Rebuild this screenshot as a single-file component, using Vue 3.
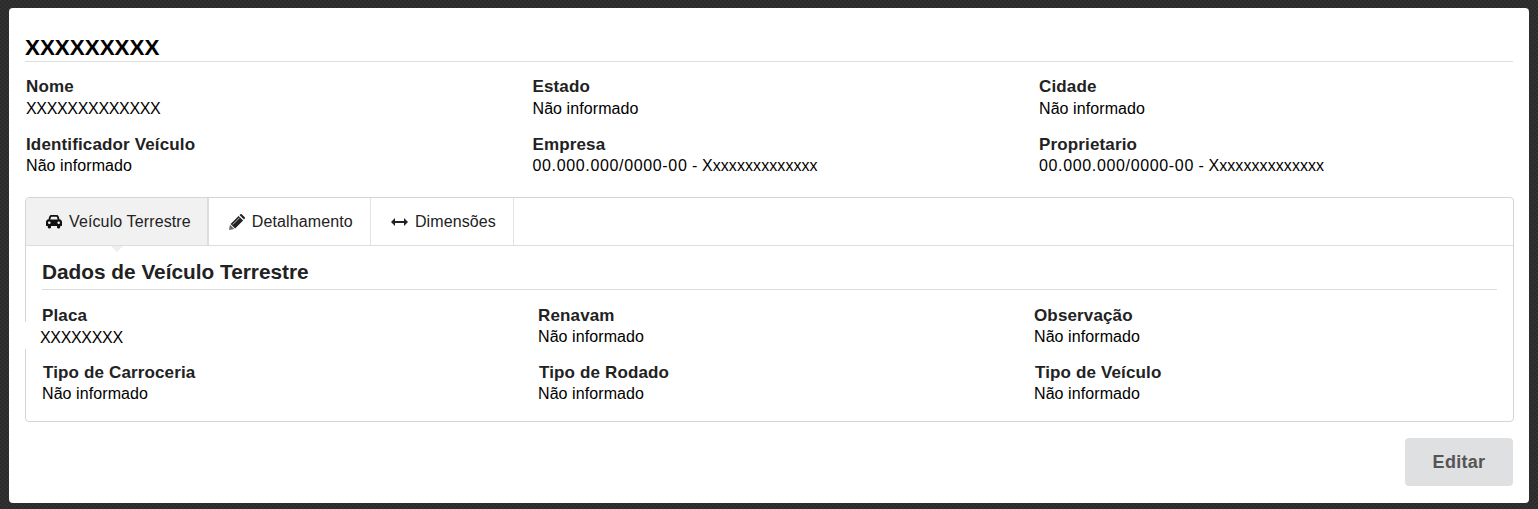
<template>
  <div class="backdrop">
    <div class="modal">
      <h2 class="title">XXXXXXXXX</h2>
      <div class="fields main-fields">
        <div v-for="f in mainFields" :key="f.label" class="field">
          <label>{{ f.label }}</label>
          <div v-if="f.doc" class="value"><span class="doc">{{ f.doc }}</span> - {{ f.value }}</div>
          <div v-else class="value" :class="f.type">{{ f.value }}</div>
        </div>
      </div>

      <div class="tabs">
        <ul class="tab-nav">
          <li v-for="(t, i) in tabs" :key="t.label" :class="{ active: i === 0 }">
            <svg v-if="t.icon === 'car'" width="16" height="14" viewBox="0 0 16 14">
              <path fill-rule="evenodd" fill="#111" d="M3.300 1.600C3.600.6 4.400 0 5.300 0h5.400c.9 0 1.700.6 2 1.600l.9 2.800.7.200c.9.400 1.700 1.200 1.700 2.300v3.600c0 .3-.2.500-.5.500H14.200v1.300c0 .7-.5 1.200-1.200 1.200h-.8c-.7 0-1.200-.5-1.200-1.200V11H5v1.300c0 .7-.5 1.200-1.200 1.200H3c-.7 0-1.200-.5-1.200-1.200V11H.5c-.3 0-.5-.2-.5-.5V6.900c0-1.100.8-1.900 1.700-2.300l.7-.2zM4.300 4.500h7.400l-.7-2.300c-.1-.3-.3-.5-.6-.5H5.600c-.3 0-.5.200-.6.500zM3.300 6.500a1.300 1.300 0 1 0 0 2.600 1.300 1.300 0 0 0 0-2.600zM12.700 6.500a1.300 1.300 0 1 0 0 2.600 1.300 1.300 0 0 0 0-2.600z"/>
            </svg>
            <svg v-else-if="t.icon === 'pencil'" width="16" height="16" viewBox="0 0 16 16">
              <path fill="#666" d="M0 16l1-5.300 4.300 4.300z"/>
              <path fill="#222" d="M1.600 9.900l8-8 4.500 4.500-8 8zM10.500 1l.7-.6c.5-.5 1.200-.5 1.700 0l2.700 2.700c.5.500.5 1.200 0 1.700l-.6.700z"/>
              <path stroke="#fff" stroke-width=".7" d="M3.800 10.500l6.800-6.800"/>
            </svg>
            <svg v-else width="17" height="8" viewBox="0 0 17 8">
              <path fill="#222" d="M0 4l4-4v3h9V0l4 4-4 4V5H4v3z"/>
            </svg>
            <span>{{ t.label }}</span>
          </li>
        </ul>
        <div class="tab-body">
          <h3 class="section-title">Dados de Veículo Terrestre</h3>
          <div class="fields inner-fields">
            <div v-for="f in vehicleFields" :key="f.label" class="field" :class="f.cls">
              <label>{{ f.label }}</label>
              <div class="value" :class="f.type">{{ f.value }}</div>
            </div>
          </div>
        </div>
      </div>

      <div class="actions">
        <button class="btn-edit" disabled>Editar</button>
      </div>
    </div>
  </div>
</template>

<script setup>
const none = 'Não informado'
const doc = '00.000.000/0000-00'
const owner = 'Xxxxxxxxxxxxxx'

const mainFields = [
  { label: 'Nome', value: 'XXXXXXXXXXXXX', type: 'masked' },
  { label: 'Estado', value: none },
  { label: 'Cidade', value: none },
  { label: 'Identificador Veículo', value: none },
  { label: 'Empresa', doc, value: owner },
  { label: 'Proprietario', doc, value: owner }
]

const tabs = [
  { label: 'Veículo Terrestre', icon: 'car' },
  { label: 'Detalhamento', icon: 'pencil' },
  { label: 'Dimensões', icon: 'arrows' }
]

const vehicleFields = [
  { label: 'Placa', value: 'XXXXXXXX', cls: 'plate', type: 'masked' },
  { label: 'Renavam', value: none },
  { label: 'Observação', value: none },
  { label: 'Tipo de Carroceria', value: none, cls: 'nudge' },
  { label: 'Tipo de Rodado', value: none, cls: 'nudge' },
  { label: 'Tipo de Veículo', value: none, cls: 'nudge' }
]
</script>

<style>
html, body {
  margin: 0;
  background: #2b2b2b;
}
</style>

<style scoped>
.backdrop {
  width: 1538px;
  height: 509px;
  box-sizing: border-box;
  padding: 8px 9px 6px;
  overflow: hidden;
  background-color: #2d2d2d;
  background-image: repeating-conic-gradient(#2a2a2a 0 25%, #323232 0 50%);
  background-size: 4px 4px;
  font-family: "Liberation Sans", Arial, sans-serif;
  color: #000;
}

.modal {
  height: 495px;
  box-sizing: border-box;
  padding: 26px 16px 16px;
  background: #fff;
  border-radius: 4px;
}

.title {
  margin: 0;
  height: 27px;
  font-size: 22.4px;
  line-height: 27px;
  font-weight: 700;
  color: #000;
  border-bottom: 1px solid #ddd;
}

.fields {
  display: grid;
  grid-template-columns: repeat(3, 1fr);
  column-gap: 30px;
}

.main-fields {
  width: 1489.5px;
  margin: 14px 0 0 1px;
}

.main-fields .field:nth-child(n+4) label {
  margin-top: 1px;
  line-height: 21px;
}

.inner-fields {
  width: 1458px;
  margin: 15px 0 0 1px;
}

.inner-fields label {
  line-height: 21px;
}

.field {
  height: 57px;
}

label {
  display: block;
  font-size: 17px;
  line-height: 22px;
  font-weight: 700;
  letter-spacing: 0.14px;
  color: #222;
}

.value {
  font-size: 16px;
  line-height: 22px;
  letter-spacing: 0.08px;
  color: #000;
}

.value.masked {
  letter-spacing: -0.33px;
}

.doc {
  letter-spacing: 0.65px;
}

.plate .value {
  position: relative;
  width: 90px;
  margin: -4px 0 0 -17px;
  padding: 5px 0 0 15px;
  background: #fff;
}

.nudge label {
  margin-left: 1px;
}

.tabs {
  margin: 7px -1px 0 0;
  height: 225px;
  box-sizing: border-box;
  border: 1px solid #d4d4d4;
  border-radius: 4px;
}

.tab-nav {
  display: flex;
  height: 47px;
  margin: 0;
  padding: 0;
  list-style: none;
  border-bottom: 1px solid #ddd;
}

.tab-nav li {
  position: relative;
  display: flex;
  align-items: center;
  gap: 7px;
  padding: 0 17px 0 20px;
  font-size: 16px;
  letter-spacing: 0.12px;
  color: #222;
  border-right: 1px solid #e3e3e3;
}

.tab-nav li.active {
  padding-right: 16px;
  background: #f1f1f1;
  border-right: 2px solid #ddd;
  border-radius: 3px 0 0 0;
}

.tab-nav li.active::after {
  content: '';
  position: absolute;
  left: 85px;
  bottom: -7px;
  width: 0;
  height: 0;
  border-left: 6px solid transparent;
  border-right: 6px solid transparent;
  border-top: 6px solid #eee;
}

.tab-body {
  padding: 14px 16px 0 15px;
}

.section-title {
  margin: 0 0 0 1px;
  height: 29px;
  font-size: 20.8px;
  line-height: 24px;
  font-weight: 700;
  color: #222;
  border-bottom: 1px solid #ddd;
}

.actions {
  display: flex;
  justify-content: flex-end;
  margin-top: 16px;
}

.btn-edit {
  width: 108px;
  height: 48px;
  padding: 0;
  border: none;
  border-radius: 4px;
  background: #dfe0e2;
  color: #555;
  font-family: inherit;
  font-size: 18px;
  font-weight: 700;
  letter-spacing: 0.3px;
}
</style>
